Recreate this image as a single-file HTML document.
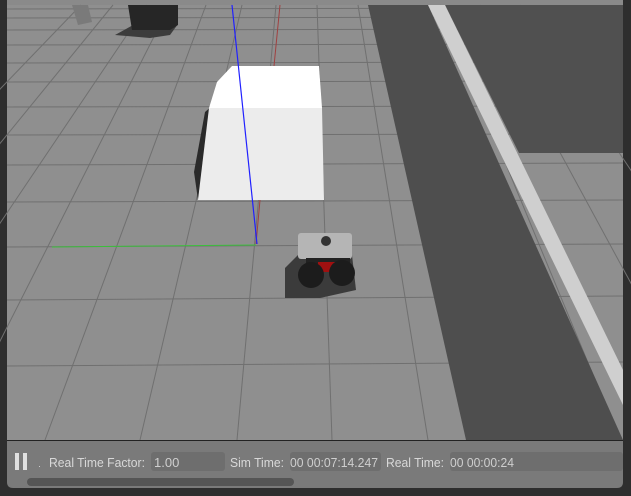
<!DOCTYPE html>
<html><head><style>
body{margin:0;width:631px;height:496px;background:#2e2e2e;overflow:hidden;font-family:"Liberation Sans",sans-serif;}
</style></head><body>
<svg width="631" height="496" style="position:absolute;left:0;top:0">
<rect x="0" y="0" width="631" height="496" fill="#2e2e2e"/>
<rect x="7" y="0" width="616" height="5" fill="#8a8a8a"/>
<rect x="7" y="5" width="616" height="436" fill="#8f8f8f"/>
<g stroke="#707070" stroke-width="1" fill="none">
<line x1="7" y1="9" x2="623" y2="8"/>
<line x1="7" y1="18" x2="623" y2="17"/>
<line x1="7" y1="30" x2="623" y2="29"/>
<line x1="7" y1="45" x2="623" y2="44"/>
<line x1="7" y1="63" x2="623" y2="62"/>
<line x1="7" y1="82" x2="623" y2="81"/>
<line x1="7" y1="107" x2="623" y2="106"/>
<line x1="7" y1="135" x2="623" y2="134"/>
<line x1="7" y1="165" x2="623" y2="163"/>
<line x1="7" y1="202" x2="623" y2="200"/>
<line x1="7" y1="247" x2="623" y2="244"/>
<line x1="7" y1="300" x2="623" y2="296"/>
<line x1="7" y1="366" x2="623" y2="362"/>
<line x1="-338" y1="440" x2="81" y2="5"/>
<line x1="-242" y1="440" x2="113" y2="5"/>
<line x1="-146" y1="440" x2="147" y2="5"/>
<line x1="-50" y1="440" x2="170" y2="5"/>
<line x1="45" y1="440" x2="206" y2="5"/>
<line x1="140" y1="440" x2="242" y2="5"/>
<line x1="237" y1="440" x2="276" y2="5"/>
<line x1="332" y1="440" x2="317" y2="5"/>
<line x1="428" y1="440" x2="358" y2="5"/>
<line x1="524" y1="440" x2="398" y2="5"/>
<line x1="620" y1="440" x2="440" y2="5"/>
<line x1="716" y1="440" x2="480" y2="5"/>
<line x1="812" y1="440" x2="520" y2="5"/>
</g>
<polygon points="72,5 88,5 92,22 78,25" fill="#7a7a7a"/>
<polygon points="115,35 135,24 178,24 170,35 150,38" fill="#3c3c3c"/>
<polygon points="128,5 178,5 178,25 170,30 132,30" fill="#262626"/>
<polygon points="205,112 212,106 198,200 194,172" fill="#2a2a2a"/>
<polygon points="232,66 319,66 322,108 209,108 217,82" fill="#ffffff"/>
<polygon points="209,108 322,108 324,200 198,200" fill="#ececec"/>
<line x1="280" y1="5" x2="274" y2="66" stroke="#a04040" stroke-width="1"/>
<line x1="260" y1="200" x2="256" y2="244" stroke="#a04040" stroke-width="1"/>
<line x1="52" y1="247" x2="256" y2="245" stroke="#3cbf3c" stroke-width="1"/>
<line x1="232" y1="5" x2="257" y2="244" stroke="#2020ff" stroke-width="1.2"/>
<polygon points="445,5 623,5 623,153 519,153" fill="#505050"/>
<polygon points="368,5 428,5 623,440 466,440" fill="#4e4e4e"/>
<polygon points="428,5 445,5 623,370 623,405" fill="#cfcfcf"/>
<polygon points="285,268 298,255 352,255 356,290 320,298 285,298" fill="#3b3b3b"/>
<rect x="298" y="233" width="54" height="26" rx="3" fill="#b5b5b5"/>
<circle cx="326" cy="241" r="5" fill="#333"/>
<rect x="306" y="258" width="44" height="12" fill="#222"/>
<rect x="318" y="262" width="20" height="10" fill="#a01010"/>
<circle cx="311" cy="275" r="13" fill="#1c1c1c"/>
<circle cx="342" cy="273" r="13" fill="#1c1c1c"/>
<rect x="7" y="440" width="616" height="1" fill="#222"/>
<path d="M7,441 H623 V482 Q623,488 617,488 H13 Q7,488 7,482 Z" fill="#7a7a7a"/>
<rect x="15" y="453" width="4" height="17" fill="#e0e0e0"/>
<rect x="23" y="453" width="4" height="17" fill="#e0e0e0"/>
<rect x="39" y="466" width="1" height="1" fill="#ccc"/>
<rect x="151" y="452" width="74" height="19" rx="3" fill="#6e6e6e"/>
<rect x="290" y="452" width="91" height="19" rx="3" fill="#6e6e6e"/>
<rect x="450" y="452" width="173" height="19" rx="3" fill="#6e6e6e"/>
<rect x="27" y="478" width="267" height="8" rx="4" fill="#555"/>
<g font-size="13" fill="#d8d8d8">
<text x="49" y="467" textLength="96" lengthAdjust="spacingAndGlyphs">Real Time Factor:</text>
<text x="154" y="467" fill="#cfcfcf">1.00</text>
<text x="230" y="467" textLength="54" lengthAdjust="spacingAndGlyphs">Sim Time:</text>
<text x="290" y="467" fill="#cfcfcf" textLength="88" lengthAdjust="spacingAndGlyphs">00 00:07:14.247</text>
<text x="386" y="467" textLength="58" lengthAdjust="spacingAndGlyphs">Real Time:</text>
<text x="450" y="467" fill="#cfcfcf" textLength="64" lengthAdjust="spacingAndGlyphs">00 00:00:24</text>
</g>
</svg>
</body></html>
